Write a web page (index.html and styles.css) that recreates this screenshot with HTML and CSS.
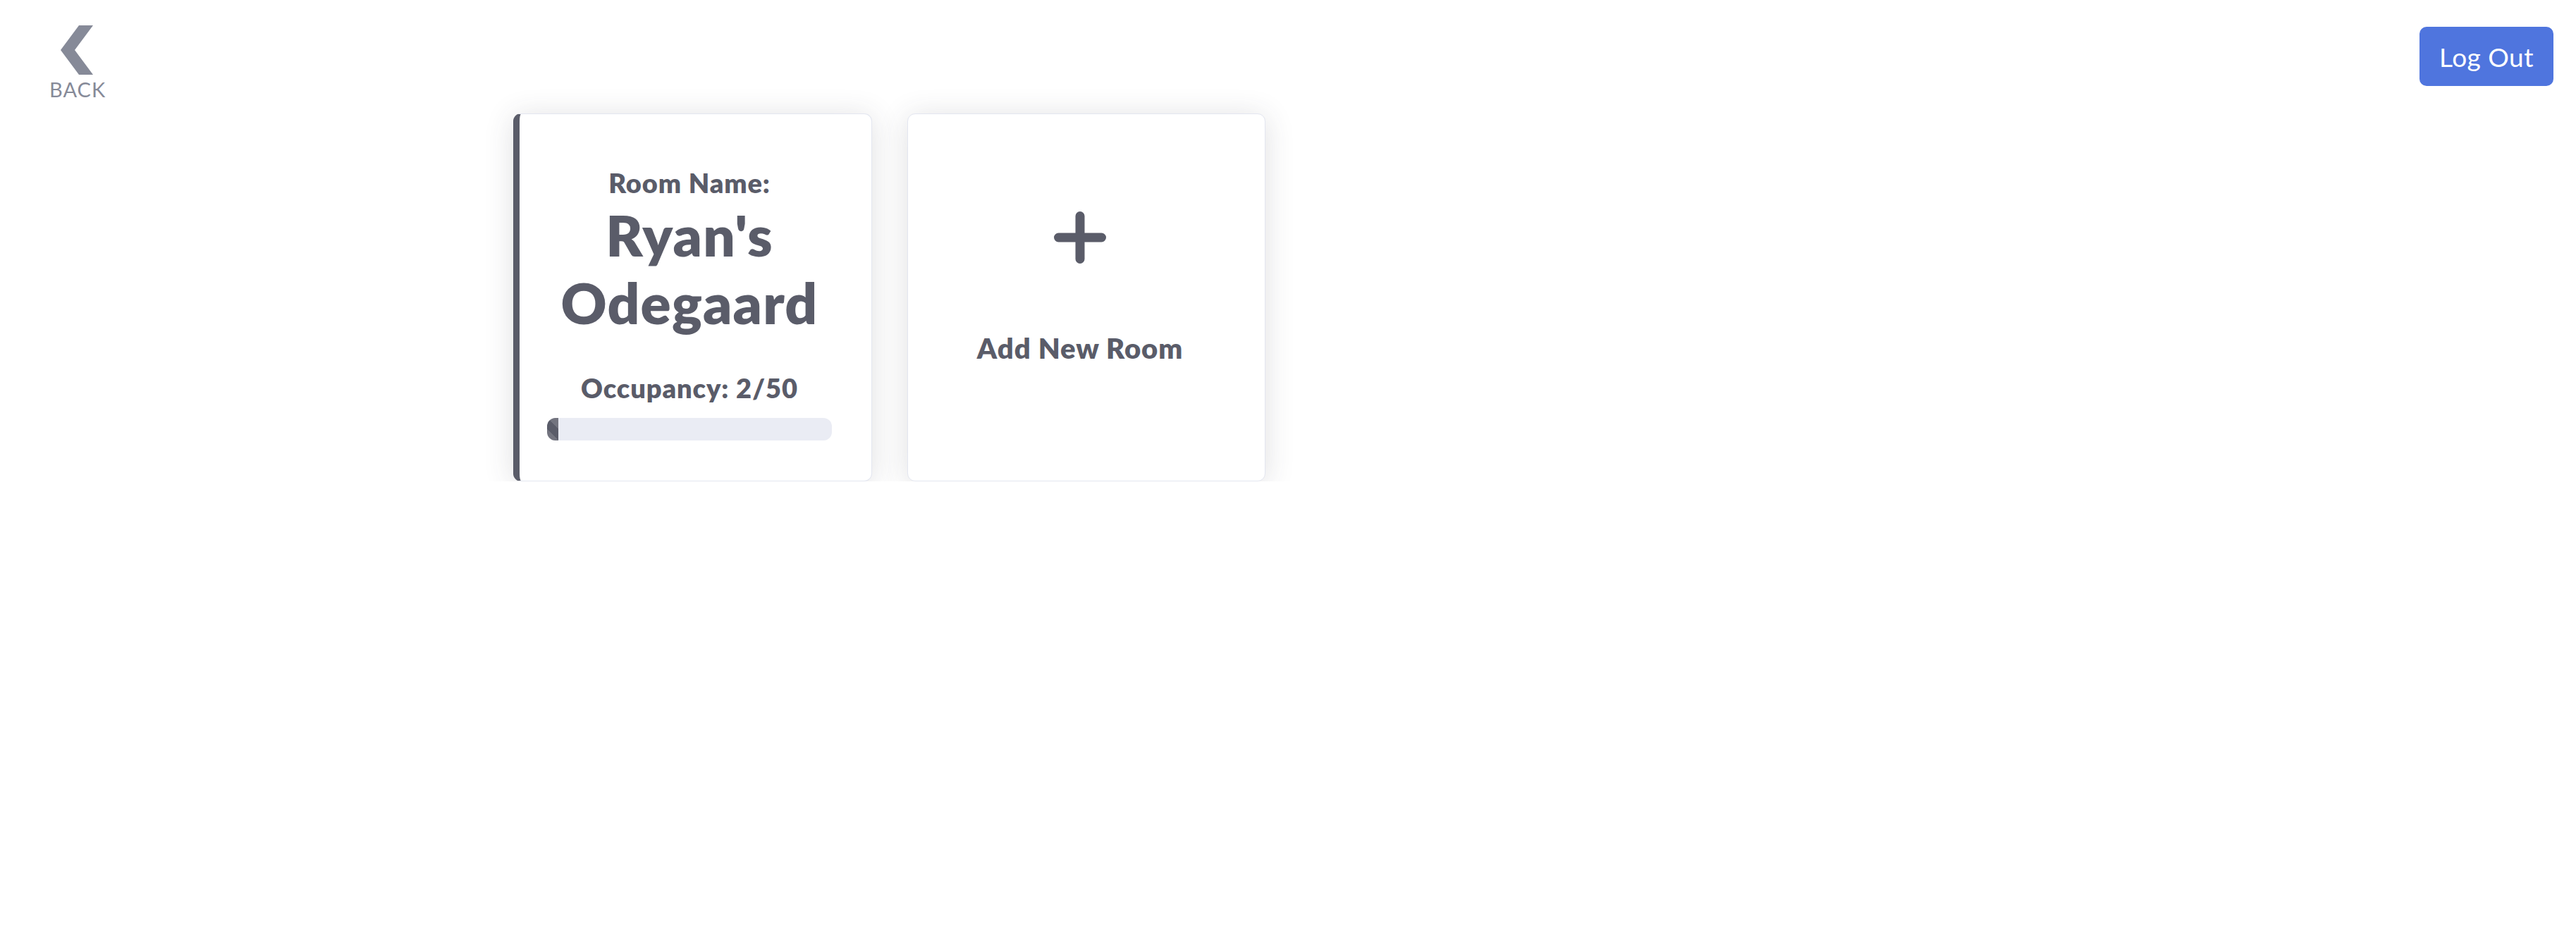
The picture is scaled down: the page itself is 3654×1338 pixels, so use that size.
FILE: index.html
```html
<!DOCTYPE html>
<html lang="en">
<head>
<meta charset="utf-8">
<title>Rooms</title>
<link rel="stylesheet" href="styles.css">
</head>
<body>
<header class="topbar">
  <a class="back" href="#">
    <svg class="back-icon" width="46" height="70" viewBox="0 0 46 70" aria-hidden="true">
      <polygon points="26,0 46,0 20,35 46,70 26,70 0,35" fill="#868a98"/>
    </svg>
    <span class="back-label">BACK</span>
  </a>
  <button class="logout" type="button">Log Out</button>
</header>
<main class="rooms">
  <section class="card card-room">
    <p class="room-label">Room Name:</p>
    <h2 class="room-name">Ryan's Odegaard</h2>
    <p class="occupancy">Occupancy: 2/50</p>
    <div class="progress"><div class="progress-fill" style="width: 4%"></div></div>
  </section>
  <section class="card card-add">
    <svg class="plus" width="74" height="74" viewBox="0 0 74 74" aria-hidden="true">
      <path d="M37 6.5V67.5M6.5 37H67.5" stroke="#5a5c69" stroke-width="13" stroke-linecap="round" fill="none"/>
    </svg>
    <p class="add-label">Add New Room</p>
  </section>
</main>
</body>
</html>
```
FILE: styles.css
```css
html, body {
  margin: 0;
  padding: 0;
  background: #ffffff;
}
body {
  font-family: "Lato", "Open Sans", sans-serif;
  color: #5a5c69;
}
.topbar {
  box-sizing: border-box;
  height: 161px;
  display: flex;
  justify-content: space-between;
  align-items: flex-start;
  padding: 36px 32px 0 70px;
}
.back {
  display: flex;
  flex-direction: column;
  align-items: center;
  text-decoration: none;
  color: #868a98;
}
.back-icon {
  display: block;
  margin-left: -3px;
}
.back-label {
  font-size: 29px;
  line-height: 1.2;
  margin-top: 4px;
  letter-spacing: 1px;
}
.logout {
  margin-top: 2px;
  box-sizing: border-box;
  width: 190px;
  height: 84px;
  border: none;
  border-radius: 10px;
  background: #4f75de;
  color: #ffffff;
  font-family: "Lato", "Open Sans", sans-serif;
  font-size: 37px;
  letter-spacing: 0.5px;
  padding: 0;
}
.rooms {
  display: flex;
  gap: 50px;
  padding-left: 728px;
}
.card {
  box-sizing: border-box;
  width: 509px;
  height: 522px;
  background: #ffffff;
  border: 1px solid #e3e6f0;
  border-radius: 11px;
  box-shadow: 0 4px 42px rgba(58, 59, 69, 0.16);
  display: flex;
  flex-direction: column;
  align-items: center;
}
.card-room {
  border-left: 9px solid #5a5c69;
  padding: 75px 56px 0 39px;
}
.card-add {
  width: 508px;
  padding: 138px 56px 0 38px;
}
.room-label, .occupancy, .add-label {
  margin: 0;
  font-weight: 800;
  font-size: 38px;
  line-height: 1.2;
  letter-spacing: 0.9px;
  text-align: center;
}
.room-name {
  margin: 2px 0 0;
  font-size: 80px;
  line-height: 96px;
  font-weight: 800;
  letter-spacing: 1.2px;
  text-align: center;
}
.occupancy {
  margin-top: 51px;
}
.progress {
  align-self: stretch;
  margin-top: 20px;
  height: 32px;
  border-radius: 12px;
  background: #eaecf4;
  overflow: hidden;
  display: flex;
}
.progress-fill {
  height: 100%;
  background-color: #5a5c69;
  background-image: linear-gradient(45deg, rgba(255,255,255,.15) 25%, transparent 25%, transparent 50%, rgba(255,255,255,.15) 50%, rgba(255,255,255,.15) 75%, transparent 75%, transparent);
  background-size: 32px 32px;
}
.plus {
  display: block;
}
.add-label {
  font-size: 40px;
  margin-top: 96px;
}
```
